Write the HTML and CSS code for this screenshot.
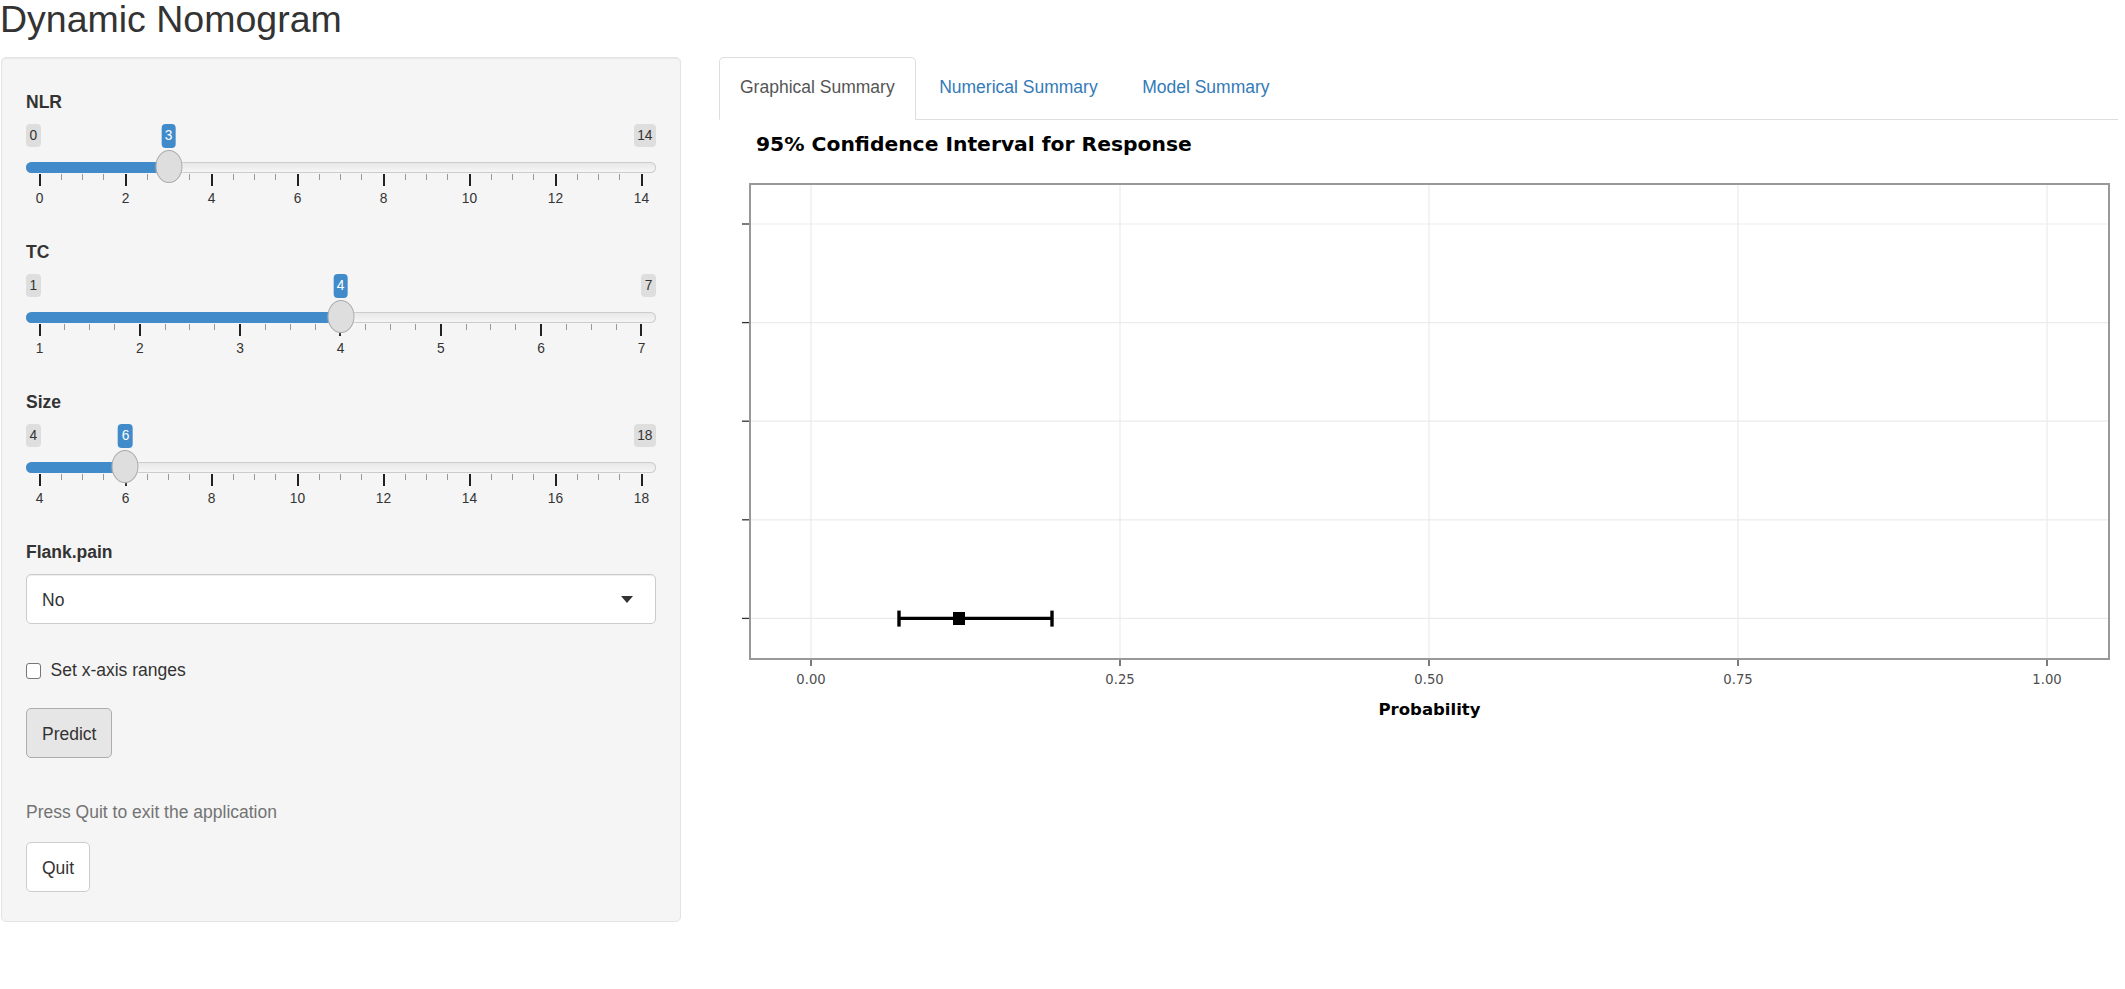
FILE: index.html
```html
<!DOCTYPE html>
<html>
<head>
<meta charset="utf-8">
<title>Dynamic Nomogram</title>
<link rel="stylesheet" href="styles.css">
</head>
<body>
<h2 class="app-title">Dynamic Nomogram</h2>
<div class="layout">
  <aside class="well">
    <div class="form-group">
      <label class="control-label">NLR</label>
      <div class="slider" style="--p:0.2143">
        <div class="slider-badges">
          <span class="badge-minmax">0</span>
          <span class="badge-value">3</span>
          <span class="badge-minmax">14</span>
        </div>
        <div class="slider-track">
          <div class="track-line"><div class="track-fill"></div></div>
          <div class="track-handle"></div>
        </div>
        <div class="slider-ticks">
          <i class="tick major"></i><i class="tick"></i><i class="tick"></i><i class="tick"></i>
          <i class="tick major"></i><i class="tick"></i><i class="tick"></i><i class="tick"></i>
          <i class="tick major"></i><i class="tick"></i><i class="tick"></i><i class="tick"></i>
          <i class="tick major"></i><i class="tick"></i><i class="tick"></i><i class="tick"></i>
          <i class="tick major"></i><i class="tick"></i><i class="tick"></i><i class="tick"></i>
          <i class="tick major"></i><i class="tick"></i><i class="tick"></i><i class="tick"></i>
          <i class="tick major"></i><i class="tick"></i><i class="tick"></i><i class="tick"></i>
          <i class="tick major"></i>
        </div>
        <div class="slider-grid-text">
          <span>0</span><span>2</span><span>4</span><span>6</span><span>8</span><span>10</span><span>12</span><span>14</span>
        </div>
      </div>
    </div>

    <div class="form-group">
      <label class="control-label">TC</label>
      <div class="slider" style="--p:0.5">
        <div class="slider-badges">
          <span class="badge-minmax">1</span>
          <span class="badge-value">4</span>
          <span class="badge-minmax">7</span>
        </div>
        <div class="slider-track">
          <div class="track-line"><div class="track-fill"></div></div>
          <div class="track-handle"></div>
        </div>
        <div class="slider-ticks">
          <i class="tick major"></i><i class="tick"></i><i class="tick"></i><i class="tick"></i>
          <i class="tick major"></i><i class="tick"></i><i class="tick"></i><i class="tick"></i>
          <i class="tick major"></i><i class="tick"></i><i class="tick"></i><i class="tick"></i>
          <i class="tick major"></i><i class="tick"></i><i class="tick"></i><i class="tick"></i>
          <i class="tick major"></i><i class="tick"></i><i class="tick"></i><i class="tick"></i>
          <i class="tick major"></i><i class="tick"></i><i class="tick"></i><i class="tick"></i>
          <i class="tick major"></i>
        </div>
        <div class="slider-grid-text">
          <span>1</span><span>2</span><span>3</span><span>4</span><span>5</span><span>6</span><span>7</span>
        </div>
      </div>
    </div>

    <div class="form-group">
      <label class="control-label">Size</label>
      <div class="slider" style="--p:0.142857">
        <div class="slider-badges">
          <span class="badge-minmax">4</span>
          <span class="badge-value">6</span>
          <span class="badge-minmax">18</span>
        </div>
        <div class="slider-track">
          <div class="track-line"><div class="track-fill"></div></div>
          <div class="track-handle"></div>
        </div>
        <div class="slider-ticks">
          <i class="tick major"></i><i class="tick"></i><i class="tick"></i><i class="tick"></i>
          <i class="tick major"></i><i class="tick"></i><i class="tick"></i><i class="tick"></i>
          <i class="tick major"></i><i class="tick"></i><i class="tick"></i><i class="tick"></i>
          <i class="tick major"></i><i class="tick"></i><i class="tick"></i><i class="tick"></i>
          <i class="tick major"></i><i class="tick"></i><i class="tick"></i><i class="tick"></i>
          <i class="tick major"></i><i class="tick"></i><i class="tick"></i><i class="tick"></i>
          <i class="tick major"></i><i class="tick"></i><i class="tick"></i><i class="tick"></i>
          <i class="tick major"></i>
        </div>
        <div class="slider-grid-text">
          <span>4</span><span>6</span><span>8</span><span>10</span><span>12</span><span>14</span><span>16</span><span>18</span>
        </div>
      </div>
    </div>

    <div class="form-group select-group">
      <label class="control-label">Flank.pain</label>
      <div class="select-box">
        <span class="select-value">No</span>
        <span class="select-caret"></span>
      </div>
    </div>

    <label class="checkbox-row">
      <span class="checkbox-box"></span>
      <span>Set x-axis ranges</span>
    </label>

    <div class="btn-row btn-row-predict">
      <button class="btn btn-active">Predict</button>
    </div>

    <p class="help-text">Press Quit to exit the application</p>

    <div class="btn-row btn-row-quit">
      <button class="btn">Quit</button>
    </div>
  </aside>

  <main class="main">
    <ul class="nav-tabs">
      <li class="active"><a>Graphical Summary</a></li>
      <li><a>Numerical Summary</a></li>
      <li><a>Model Summary</a></li>
    </ul>

    <svg class="plot" width="1399" height="620" viewBox="0 0 1399 620">
      <text class="plot-title" x="37" y="31">95% Confidence Interval for Response</text>

      <g class="grid-lines">
        <line x1="31" x2="1390" y1="104" y2="104"/>
        <line x1="31" x2="1390" y1="202.6" y2="202.6"/>
        <line x1="31" x2="1390" y1="301.2" y2="301.2"/>
        <line x1="31" x2="1390" y1="399.8" y2="399.8"/>
        <line x1="31" x2="1390" y1="498.4" y2="498.4"/>
        <line x1="92" x2="92" y1="64" y2="539"/>
        <line x1="401" x2="401" y1="64" y2="539"/>
        <line x1="710" x2="710" y1="64" y2="539"/>
        <line x1="1019" x2="1019" y1="64" y2="539"/>
        <line x1="1328" x2="1328" y1="64" y2="539"/>
      </g>

      <rect class="panel-border" x="31" y="64" width="1359" height="475"/>

      <g class="axis-ticks">
        <line x1="23" x2="30" y1="104" y2="104"/>
        <line x1="23" x2="30" y1="202.6" y2="202.6"/>
        <line x1="23" x2="30" y1="301.2" y2="301.2"/>
        <line x1="23" x2="30" y1="399.8" y2="399.8"/>
        <line x1="23" x2="30" y1="498.4" y2="498.4"/>
        <line x1="92" x2="92" y1="540" y2="546"/>
        <line x1="401" x2="401" y1="540" y2="546"/>
        <line x1="710" x2="710" y1="540" y2="546"/>
        <line x1="1019" x2="1019" y1="540" y2="546"/>
        <line x1="1328" x2="1328" y1="540" y2="546"/>
      </g>

      <g class="axis-labels">
        <text x="92" y="563.5">0.00</text>
        <text x="401" y="563.5">0.25</text>
        <text x="710" y="563.5">0.50</text>
        <text x="1019" y="563.5">0.75</text>
        <text x="1328" y="563.5">1.00</text>
      </g>

      <text class="axis-title" x="710.5" y="594.5">Probability</text>

      <g class="errorbar">
        <line x1="180" x2="333" y1="498.4" y2="498.4"/>
        <line x1="180" x2="180" y1="490.6" y2="506.6"/>
        <line x1="333" x2="333" y1="490.6" y2="506.6"/>
      </g>
      <rect class="point" x="234" y="492" width="12" height="13"/>
    </svg>
  </main>
</div>
</body>
</html>
```

FILE: styles.css
```css
* {
  box-sizing: border-box;
}

html, body {
  margin: 0;
  padding: 0;
  background: #ffffff;
}

body {
  font-family: "Liberation Sans", Arial, Helvetica, sans-serif;
  font-size: 17.5px;
  line-height: 25px;
  color: #333333;
  width: 2125px;
  height: 989px;
  overflow: hidden;
}

.app-title {
  margin: -1px 0 18px 0;
  font-size: 37.5px;
  line-height: 40px;
  font-weight: 500;
  color: #333333;
}

.layout {
  display: flex;
  align-items: flex-start;
  gap: 38px;
  padding-left: 1px;
}

/* ---------- sidebar well ---------- */
.well {
  width: 680px;
  flex: none;
  padding: 32px 24px 29px 24px;
  background: #f5f5f5;
  border: 1px solid #e3e3e3;
  border-radius: 5px;
  box-shadow: inset 0 1px 1px rgba(0, 0, 0, 0.05);
}

.form-group {
  margin-bottom: 33px;
}

.control-label {
  display: block;
  font-weight: bold;
  line-height: 25px;
}

/* ---------- slider ---------- */
.slider-badges {
  position: relative;
  display: flex;
  justify-content: space-between;
  margin-top: 9px;
  height: 24px;
}

.badge-minmax {
  height: 23px;
  padding: 0 3.5px;
  font-size: 13.75px;
  line-height: 23px;
  color: #333333;
  background: #dedede;
  border-radius: 4px;
}

.badge-value {
  position: absolute;
  top: 0;
  left: calc(13.5px + 602px * var(--p));
  transform: translateX(-50%);
  height: 24px;
  padding: 0 3.5px;
  font-size: 13.75px;
  line-height: 24px;
  color: #ffffff;
  background: #428bca;
  border-radius: 4px;
}

.slider-track {
  position: relative;
  height: 24px;
  margin-top: 2px;
  padding-top: 12px;
}

.track-line {
  height: 11px;
  border-radius: 8px;
  background: linear-gradient(to bottom, #dedede -50%, #ffffff 150%);
  box-shadow: inset 0 0 0 1px #cccccc;
  overflow: hidden;
}

.track-fill {
  width: calc(13.5px + 602px * var(--p));
  height: 100%;
  background: #428bca;
}

.track-handle {
  position: absolute;
  top: 0;
  left: calc(13.5px + 602px * var(--p));
  transform: translateX(-50%);
  width: 27px;
  height: 33px;
  border-radius: 50%;
  background: #dedede;
  border: 1px solid #ababab;
  box-shadow: 1px 1px 3px rgba(255, 255, 255, 0.3);
  z-index: 2;
}

.slider-ticks {
  display: flex;
  justify-content: space-between;
  align-items: flex-start;
  height: 12px;
  margin: 0 13.5px 0 12.5px;
}

.tick {
  display: block;
  width: 1px;
  height: 6px;
  background: #999999;
}

.tick.major {
  width: 2px;
  height: 12px;
  background: #222222;
}

.slider-grid-text {
  display: flex;
  justify-content: space-between;
  margin: 5px -0.5px 0 -1.5px;
  font-size: 13.75px;
  line-height: 16px;
  color: #333333;
}

.slider-grid-text span {
  width: 30px;
  text-align: center;
}

/* ---------- select ---------- */
.select-group {
  margin-bottom: 0;
}

.select-box {
  display: flex;
  justify-content: space-between;
  align-items: flex-start;
  margin-top: 9px;
  height: 50px;
  padding: 13px 22px 10px 15px;
  background: #ffffff;
  border: 1px solid #cccccc;
  border-radius: 5px;
  box-shadow: inset 0 1px 1px rgba(0, 0, 0, 0.075);
}

.select-caret {
  margin-top: 8px;
  width: 0;
  height: 0;
  border-style: solid;
  border-width: 7px 6.5px 0 6.5px;
  border-color: #333333 transparent transparent transparent;
}

/* ---------- checkbox ---------- */
.checkbox-row {
  display: flex;
  align-items: center;
  gap: 9.5px;
  margin-top: 34px;
  line-height: 25px;
}

.checkbox-box {
  width: 15px;
  height: 16px;
  background: #ffffff;
  border: 1px solid #767676;
  border-radius: 3px;
}

/* ---------- buttons ---------- */
.btn-row-predict {
  margin-top: 25px;
}

.btn-row-quit {
  margin-top: 17px;
}

.btn {
  display: inline-block;
  margin: 0;
  height: 50px;
  padding: 13px 15px 10px 15px;
  font-family: "Liberation Sans", Arial, Helvetica, sans-serif;
  font-size: 17.5px;
  line-height: 25px;
  color: #333333;
  background: #ffffff;
  border: 1px solid #cccccc;
  border-radius: 5px;
}

.btn-active {
  background: #e6e6e6;
  border-color: #adadad;
}

.help-text {
  margin: 42px 0 0 0;
  line-height: 25px;
  color: #737373;
}

/* ---------- main panel ---------- */
.main {
  width: 1399px;
  flex: none;
}

.nav-tabs {
  display: flex;
  margin: 0;
  padding: 0;
  list-style: none;
  border-bottom: 1px solid #dddddd;
}

.nav-tabs li {
  margin: 0 2.5px -1px 0;
}

.nav-tabs a {
  display: block;
  padding: 17.4px 20px 18.6px 20px;
  line-height: 25px;
  color: #337ab7;
  border: 1px solid transparent;
  border-radius: 5px 5px 0 0;
}

.nav-tabs li.active a {
  color: #555555;
  background: #ffffff;
  border-color: #dddddd #dddddd transparent #dddddd;
}

/* ---------- plot ---------- */
.plot {
  display: block;
}

.plot-title {
  font-family: "DejaVu Sans", Verdana, sans-serif;
  font-weight: bold;
  font-size: 20.3px;
  fill: #000000;
}

.grid-lines line {
  stroke: #ebebeb;
  stroke-width: 1.2;
}

.panel-border {
  fill: none;
  stroke: #999999;
  stroke-width: 2;
}

.axis-ticks line {
  stroke: #333333;
  stroke-width: 1.3;
}

.axis-labels text {
  font-family: "DejaVu Sans", Verdana, sans-serif;
  font-size: 13.2px;
  fill: #4d4d4d;
  text-anchor: middle;
}

.axis-title {
  font-family: "DejaVu Sans", Verdana, sans-serif;
  font-weight: bold;
  font-size: 16.5px;
  fill: #000000;
  text-anchor: middle;
}

.errorbar line {
  stroke: #000000;
  stroke-width: 3.4;
}

.point {
  fill: #000000;
}
```
